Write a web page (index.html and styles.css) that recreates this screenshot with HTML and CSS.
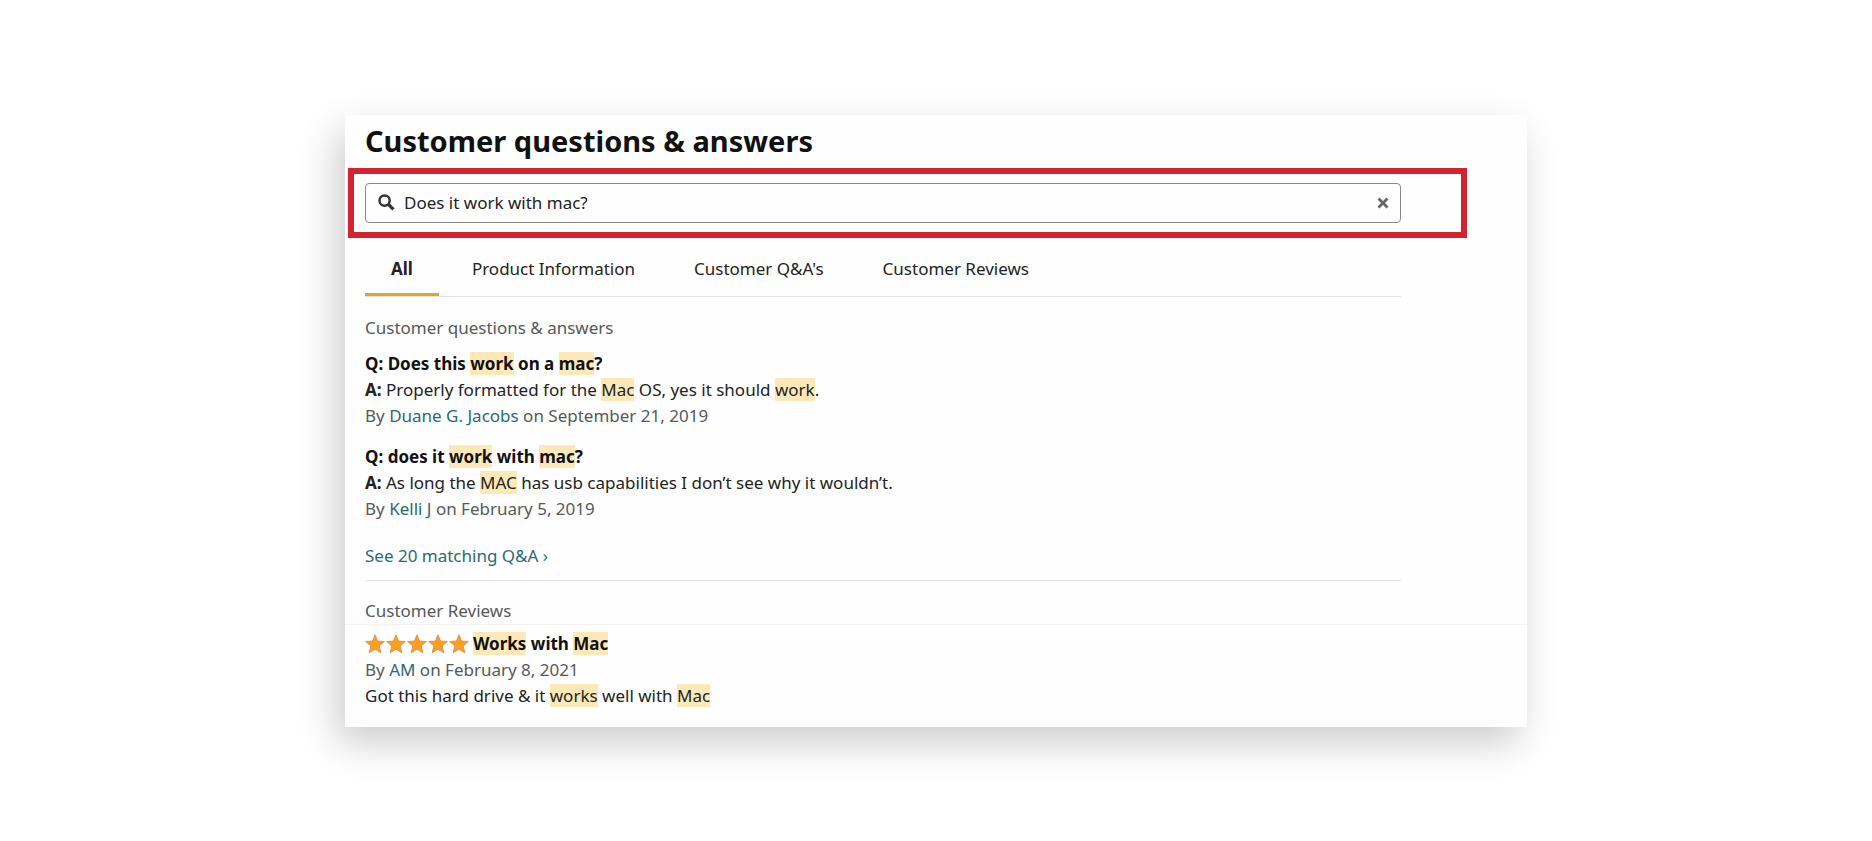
FILE: index.html
```html
<!DOCTYPE html>
<html lang="en">
<head>
<meta charset="utf-8">
<meta name="viewport" content="width=device-width, initial-scale=1">
<title>Customer questions &amp; answers</title>
<link rel="stylesheet" href="styles.css">
</head>
<body>
<svg class="defs" aria-hidden="true">
  <symbol id="star" viewBox="0 0 20 20"><path d="M10 .8l2.5 6.3 6.8.4-5.2 4.4 1.7 6.9L10 15.1l-5.8 3.7 1.7-6.9L.7 7.5l6.8-.4z" fill="#ff9d1c" stroke="#d8955a" stroke-width="1" stroke-linejoin="round"/></symbol>
</svg>
<main class="card">
  <h1 class="title">Customer questions &amp; answers</h1>
  <form class="highlight" role="search">
    <div class="search">
      <svg class="search-icon" viewBox="0 0 16 16" aria-hidden="true"><circle cx="6.2" cy="6.2" r="4.8" fill="none" stroke="#333" stroke-width="2.3"/><path d="M9.8 9.8l4.7 4.7" stroke="#333" stroke-width="3"/></svg>
      <input class="search-input" type="text" aria-label="Search questions and reviews" value="Does it work with mac?">
      <button class="clear" type="button" aria-label="Clear search"><svg viewBox="0 0 12 12"><path d="M1.5 1.5l9 9M10.5 1.5l-9 9" stroke="#666" stroke-width="2.8"/></svg></button>
    </div>
  </form>
  <nav class="tabs">
    <a class="tab active" href="#all">All</a>
    <a class="tab" href="#product">Product Information</a>
    <a class="tab" href="#qa">Customer Q&amp;A's</a>
    <a class="tab" href="#reviews">Customer Reviews</a>
  </nav>
  <section class="answers" id="qa">
    <h2 class="subtitle">Customer questions &amp; answers</h2>
    <article class="entry">
      <h3 class="question">Q: Does this <mark>work</mark> on a <mark>mac</mark>?</h3>
      <p><b>A:</b> Properly formatted for the <mark>Mac</mark> OS, yes it should <mark>work</mark>.</p>
      <p class="byline">By <a href="#duane">Duane G. Jacobs</a> on September 21, 2019</p>
    </article>
    <article class="entry">
      <h3 class="question">Q: does it <mark>work</mark> with <mark>mac</mark>?</h3>
      <p><b>A:</b> As long the <mark>MAC</mark> has usb capabilities I don’t see why it wouldn’t.</p>
      <p class="byline">By <a href="#kelli">Kelli J</a> on February 5, 2019</p>
    </article>
    <a class="more" href="#matching">See 20 matching Q&amp;A ›</a>
  </section>
  <section class="reviews" id="reviews">
    <h2 class="subtitle reviews-title">Customer Reviews</h2>
    <article class="review">
      <div class="review-head">
        <span class="stars" role="img" aria-label="5 out of 5 stars">
          <svg><use href="#star"/></svg><svg><use href="#star"/></svg><svg><use href="#star"/></svg><svg><use href="#star"/></svg><svg><use href="#star"/></svg>
        </span>
        <h3 class="question"><mark>Works</mark> with <mark>Mac</mark></h3>
      </div>
      <p class="byline">By <a href="#am">AM</a> on February 8, 2021</p>
      <p>Got this hard drive &amp; it <mark>works</mark> well with <mark>Mac</mark></p>
    </article>
  </section>
</main>
</body>
</html>
```
FILE: styles.css
```css
* { box-sizing: border-box; }

body {
  margin: 0;
  min-height: 100vh;
  display: flex;
  align-items: center;
  justify-content: center;
  background: #fff;
  color: #222;
  font-family: "Noto Sans", "Open Sans", sans-serif;
  font-size: 17px;
  line-height: 26px;
}

h1, h2, h3, p { margin: 0; font-size: inherit; }
a { color: #2a6a76; text-decoration: none; }
mark { background: #fde9b8; color: inherit; }
.defs { position: absolute; width: 0; height: 0; }

.card {
  width: 100%;
  max-width: 1182px;
  background: #fefefe;
  box-shadow: -8px 16px 36px rgba(0, 0, 0, 0.2);
}

.title {
  padding: 8px 20px 9px;
  color: #111;
  font-size: 29px;
  line-height: 36px;
}

.highlight {
  margin: 0 60px 0 3px;
  padding: 9px 60px 9px 11px;
  border: 6px solid #d2232e;
}

.search {
  display: flex;
  align-items: center;
  height: 40px;
  padding: 0 11px 0 12px;
  border: 1px solid #888;
  border-radius: 4px;
}

.search-icon { width: 17px; height: 17px; flex: none; }

.search-input {
  flex: 1;
  min-width: 0;
  padding: 0 9px;
  border: 0;
  outline: 0;
  background: none;
  color: #222;
  font: inherit;
}

.clear {
  display: flex;
  padding: 0;
  border: 0;
  background: none;
}
.clear svg { width: 12px; height: 12px; }

.tabs {
  display: flex;
  gap: 7px;
  margin: 0 126px 0 20px;
  border-bottom: 1px solid #e4e4e4;
}

.tab {
  padding: 18px 26px 11px;
  border-bottom: 3px solid transparent;
  color: #222;
}
.tab.active {
  border-color: #e5a52c;
  font-weight: 700;
}

.answers {
  margin: 0 126px 0 20px;
  padding: 18px 0 11px;
  border-bottom: 1px solid #e4e4e4;
}

.subtitle {
  color: #565959;
  font-weight: 400;
}

.question { color: #111; font-weight: 700; }
.byline { color: #565959; }
.entry { padding: 10px 0 5px; }
.more { display: block; margin-top: 16px; }

.reviews-title {
  padding: 17px 20px 0;
  border-bottom: 1px solid #f2f2f2;
}

.review { padding: 6px 20px 18px; }
.review-head { display: flex; gap: 4px; align-items: center; }
.stars { display: flex; gap: 1px; }
.stars svg { width: 20px; height: 20px; }
```
